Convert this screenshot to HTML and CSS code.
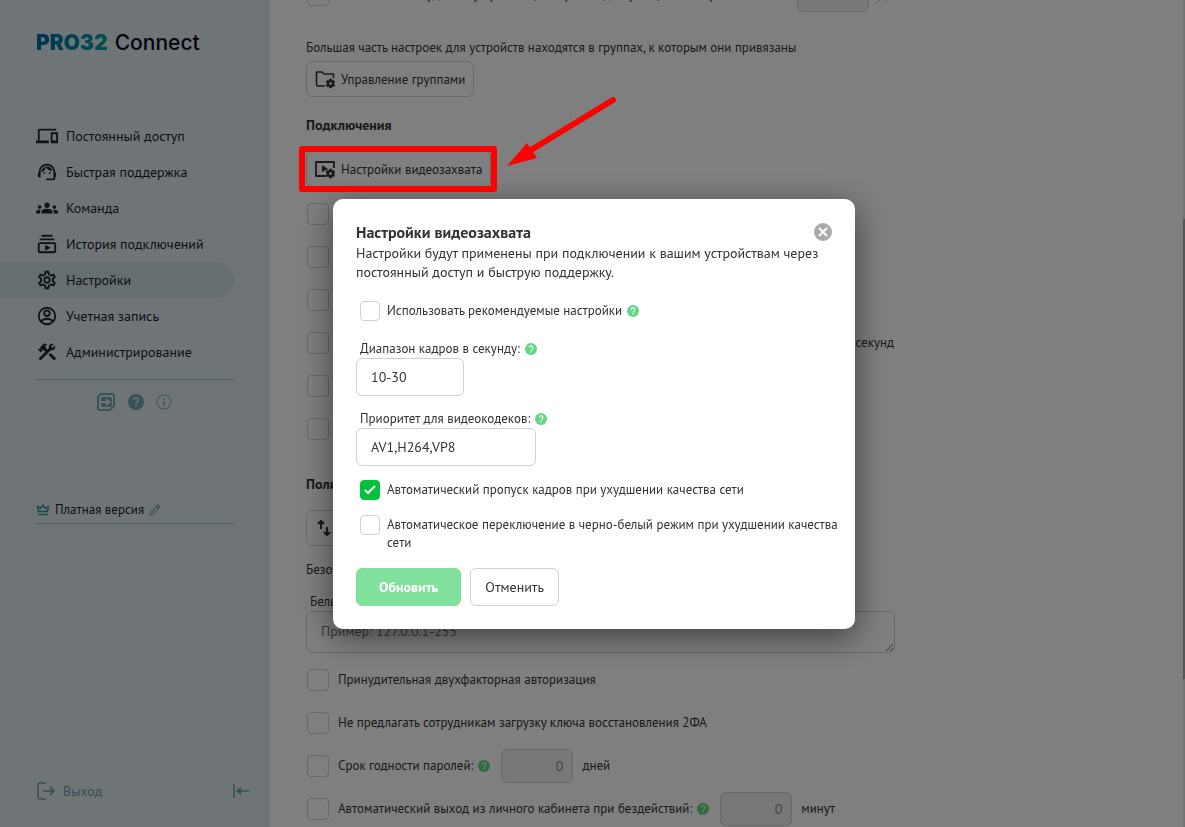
FILE: index.html
```
<!DOCTYPE html>
<html lang="ru">
<head>
  <meta charset="UTF-8">
  <meta name="viewport" content="width=device-width, initial-scale=1.0">
  <title>PRO32 Connect</title>
  <link rel="stylesheet" href="styles.css">
</head>
<body>
  <!-- Shared icons -->
  <svg class="sprite" aria-hidden="true">
    <symbol id="icon-help" viewBox="0 0 24 24">
      <circle cx="12" cy="12" r="12" fill="currentColor"/>
      <path class="cut" d="M8.4 9.2a3.6 3.6 0 1 1 5.6 3c-1.3.9-2 1.4-2 2.8" fill="none" stroke-width="2.2"/>
      <rect class="cut-fill" x="10.8" y="16.6" width="2.4" height="2.4"/>
    </symbol>
    <symbol id="icon-gear" viewBox="0 0 24 24">
      <path fill="currentColor" d="M19.43 12.98c.04-.32.07-.64.07-.98s-.03-.66-.07-.98l2.11-1.65c.19-.15.24-.42.12-.64l-2-3.46c-.09-.16-.26-.25-.44-.25-.06 0-.12.01-.17.03l-2.49 1c-.52-.4-1.08-.73-1.69-.98l-.38-2.65C14.46 2.18 14.25 2 14 2h-4c-.25 0-.46.18-.49.42l-.38 2.65c-.61.25-1.17.59-1.69.98l-2.49-1c-.06-.02-.12-.03-.18-.03-.17 0-.34.09-.43.25l-2 3.46c-.13.22-.07.49.12.64l2.11 1.65c-.04.32-.07.65-.07.98s.03.66.07.98l-2.11 1.65c-.19.15-.24.42-.12.64l2 3.46c.09.16.26.25.44.25.06 0 .12-.01.17-.03l2.49-1c.52.4 1.08.73 1.69.98l.38 2.65c.03.24.24.42.49.42h4c.25 0 .46-.18.49-.42l.38-2.65c.61-.25 1.17-.59 1.69-.98l2.49 1c.06.02.12.03.18.03.17 0 .34-.09.43-.25l2-3.46c.12-.22.07-.49-.12-.64l-2.11-1.65zM12 15.5a3.5 3.5 0 1 1 0-7 3.5 3.5 0 0 1 0 7z"/>
    </symbol>
  </svg>

  <div class="app">
    <!-- Sidebar -->
    <aside class="sidebar">
      <a href="#" class="logo"><span class="logo-mark">PRO32</span> <span class="logo-name">Connect</span></a>

      <nav class="nav">
        <a href="#" class="nav-item">
          <svg viewBox="0 0 24 24"><path d="M4 6h18V4H4c-1.1 0-2 .9-2 2v11H0v3h14v-3H4V6zm19 2h-6c-.55 0-1 .45-1 1v10c0 .55.45 1 1 1h6c.55 0 1-.45 1-1V9c0-.55-.45-1-1-1zm-1 9h-4v-7h4v7z"/></svg>
          Постоянный доступ
        </a>
        <a href="#" class="nav-item">
          <svg viewBox="0 0 24 24"><path d="M21 12.22C21 6.73 16.74 3 12 3c-4.69 0-9 3.65-9 9.28-.6.34-1 .98-1 1.72v2c0 1.1.9 2 2 2h1v-6.1c0-3.87 3.13-7 7-7s7 3.13 7 7V19h-8v2h8c1.1 0 2-.9 2-2v-1.22c.59-.31 1-.92 1-1.64v-2.3c0-.7-.41-1.31-1-1.62z"/><circle cx="9" cy="13" r="1"/><circle cx="15" cy="13" r="1"/><path d="M18 11.03C17.52 8.18 15.04 6 12.05 6c-3.03 0-6.29 2.51-6.03 6.45 2.47-1.01 4.33-3.21 4.86-5.89 1.31 2.63 4 4.44 7.12 4.47z"/></svg>
          Быстрая поддержка
        </a>
        <a href="#" class="nav-item">
          <svg viewBox="0 0 24 24"><path d="M12 12.75c1.63 0 3.07.39 4.24.9 1.08.48 1.76 1.56 1.76 2.73V18H6v-1.61c0-1.18.68-2.26 1.76-2.73 1.17-.52 2.61-.91 4.24-.91zM4 13c1.1 0 2-.9 2-2s-.9-2-2-2-2 .9-2 2 .9 2 2 2zm1.13 1.1c-.37-.06-.74-.1-1.13-.1-.99 0-1.93.21-2.78.58C.48 14.9 0 15.62 0 16.43V18h4.5v-1.61c0-.83.23-1.61.63-2.29zM20 13c1.1 0 2-.9 2-2s-.9-2-2-2-2 .9-2 2 .9 2 2 2zm4 3.43c0-.81-.48-1.53-1.22-1.85-.85-.37-1.79-.58-2.78-.58-.39 0-.76.04-1.13.1.4.68.63 1.46.63 2.29V18H24v-1.57zM12 6c1.66 0 3 1.34 3 3s-1.34 3-3 3-3-1.34-3-3 1.34-3 3-3z"/></svg>
          Команда
        </a>
        <a href="#" class="nav-item">
          <svg viewBox="0 0 24 24"><path d="M4 6h16v2H4V6zm2-4h12v2H6V2zm14 8H4c-1.1 0-2 .9-2 2v8c0 1.1.9 2 2 2h16c1.1 0 2-.9 2-2v-8c0-1.1-.9-2-2-2zm0 10H4v-8h16v8zm-10-7.27v6.53L16 16l-6-3.27z"/></svg>
          История подключений
        </a>
        <a href="#" class="nav-item active">
          <svg viewBox="0 0 24 24"><path d="M19.43 12.98c.04-.32.07-.64.07-.98s-.03-.66-.07-.98l2.11-1.65c.19-.15.24-.42.12-.64l-2-3.46c-.09-.16-.26-.25-.44-.25-.06 0-.12.01-.17.03l-2.49 1c-.52-.4-1.08-.73-1.69-.98l-.38-2.65C14.46 2.18 14.25 2 14 2h-4c-.25 0-.46.18-.49.42l-.38 2.65c-.61.25-1.17.59-1.69.98l-2.49-1c-.06-.02-.12-.03-.18-.03-.17 0-.34.09-.43.25l-2 3.46c-.13.22-.07.49.12.64l2.11 1.65c-.04.32-.07.65-.07.98s.03.66.07.98l-2.11 1.65c-.19.15-.24.42-.12.64l2 3.46c.09.16.26.25.44.25.06 0 .12-.01.17-.03l2.49-1c.52.4 1.08.73 1.69.98l.38 2.65c.03.24.24.42.49.42h4c.25 0 .46-.18.49-.42l.38-2.65c.61-.25 1.17-.59 1.69-.98l2.49 1c.06.02.12.03.18.03.17 0 .34-.09.43-.25l2-3.46c.12-.22.07-.49-.12-.64l-2.11-1.65zm-1.98-1.71c.04.31.05.52.05.73 0 .21-.02.43-.05.73l-.14 1.13.89.7 1.08.84-.7 1.21-1.27-.51-1.04-.42-.9.68c-.43.32-.84.56-1.25.73l-1.06.43-.16 1.13-.2 1.35h-1.4l-.19-1.35-.16-1.13-1.06-.43c-.43-.18-.83-.41-1.23-.71l-.91-.7-1.06.43-1.27.51-.7-1.21 1.08-.84.89-.7-.14-1.13c-.03-.31-.05-.54-.05-.74s.02-.43.05-.73l.14-1.13-.89-.7-1.08-.84.7-1.21 1.27.51 1.04.42.9-.68c.43-.32.84-.56 1.25-.73l1.06-.43.16-1.13.2-1.35h1.39l.19 1.35.16 1.13 1.06.43c.43.18.83.41 1.23.71l.91.7 1.06-.43 1.27-.51.7 1.21-1.07.85-.89.7.14 1.13zM12 8c-2.21 0-4 1.79-4 4s1.79 4 4 4 4-1.79 4-4-1.79-4-4-4zm0 6c-1.1 0-2-.9-2-2s.9-2 2-2 2 .9 2 2-.9 2-2 2z"/></svg>
          Настройки
        </a>
        <a href="#" class="nav-item">
          <svg viewBox="0 0 24 24" class="outline"><circle cx="12" cy="12" r="9"/><circle cx="12" cy="9" r="3"/><path d="M5.500 18c2-2.600 4.200-3 6.500-3s4.500.4 6.500 3"/></svg>
          Учетная запись
        </a>
        <a href="#" class="nav-item">
          <svg viewBox="0 0 24 24"><path d="M13.78 15.17l2.12-2.12 6 6-2.12 2.12z"/><path d="M17.5 10c1.93 0 3.5-1.57 3.5-3.5 0-.58-.16-1.12-.41-1.6l-2.7 2.7-1.49-1.49 2.7-2.7c-.48-.25-1.02-.41-1.6-.41C15.57 3 14 4.57 14 6.5c0 .41.08.8.21 1.16l-1.85 1.85-1.78-1.78.71-.71-1.41-1.41L12 3.49c-1.17-1.17-3.07-1.17-4.24 0L4.22 7.03l1.41 1.41H2.81L2.1 9.15l3.54 3.54.71-.71V9.15l1.41 1.41.71-.71 1.78 1.78-7.41 7.41 2.12 2.12L16.34 9.79c.36.13.75.21 1.16.21z"/></svg>
          Администрирование
        </a>
      </nav>

      <div class="quick-links">
        <a href="#" aria-label="Подключиться">
          <svg width="20" height="20" viewBox="0 0 20 20" fill="none" stroke="currentColor"><path d="M5 2h11a2 2 0 0 1 2 2v10l-4 4H4a2 2 0 0 1-2-2V5z" stroke-width="2"/><rect x="5" y="5" width="11" height="10" rx="2" fill="currentColor" stroke="none"/><path class="cut" d="M5 10h6" stroke-width="2"/><path class="cut-fill" d="M10 6l5 4-5 4z" stroke="none"/></svg>
        </a>
        <a href="#" aria-label="Помощь"><svg width="16" height="16"><use href="#icon-help"/></svg></a>
        <a href="#" class="faded" aria-label="О программе">
          <svg width="16" height="16" viewBox="0 0 16 16" fill="none" stroke="currentColor"><circle cx="8" cy="8" r="7" stroke-width="1.4"/><path d="M8 7v5M8 4v2" stroke-width="2"/></svg>
        </a>
      </div>

      <div class="plan">
        <svg class="crown" width="14" height="14" viewBox="0 0 14 14" fill="none" stroke="currentColor"><path d="M2.500 8.500h9l.8-5-3 2L7 2 4.700 5.500l-3-2zM2 11.500h10" stroke-width="1.500"/></svg>
        <span>Платная версия</span>
        <a href="#" aria-label="Изменить">
          <svg width="12" height="12" viewBox="0 0 12 12" fill="none" stroke="currentColor" stroke-width="1.300"><path d="M1 11l.6-2.500L9 1l2 2-7.500 7.500zM7.600 2.500l2 2"/></svg>
        </a>
      </div>

      <div class="sidebar-footer">
        <a href="#" class="logout">
          <svg width="20" height="18" viewBox="0 0 20 18" fill="none" stroke="currentColor" stroke-width="1.500"><path d="M10 1H4a2 2 0 0 0-2 2v12a2 2 0 0 0 2 2h6M7 9h11M14 5l4 4-4 4"/></svg>
          Выход
        </a>
        <button class="collapse" aria-label="Свернуть меню">
          <svg width="18" height="16" viewBox="0 0 18 16" fill="none" stroke="currentColor" stroke-width="1.500"><path d="M2 1v14M6 8h11"/><path d="M9 4L4 8l5 4z" fill="currentColor" stroke="none"/></svg>
        </button>
      </div>
    </aside>

    <!-- Settings page -->
    <main class="main">
      <div class="content">
        <div class="option first">
          <input type="checkbox" id="auto-delete">
          <label for="auto-delete">Автоматически удалять устройства, которые недоступны, и если прошло более:</label>
          <input type="text" class="number" aria-label="Дней до удаления" disabled>
          <span>дней</span>
        </div>

        <p class="note">Большая часть настроек для устройств находятся в группах, к которым они привязаны</p>
        <button class="tool-button">
          <svg width="20" height="20" viewBox="0 0 20 20" fill="none" stroke="currentColor"><path d="M10 17H3a1.500 1.500 0 0 1-1.500-1.500V3H7l2 2h9.500v4" stroke-width="1.600" stroke-linejoin="round"/><use href="#icon-gear" x="10" y="9" width="11" height="11"/></svg>
          Управление группами
        </button>

        <h2 class="section-title">Подключения</h2>
        <div class="highlight">
          <button class="tool-button">
            <svg width="20" height="20" viewBox="0 0 20 20" fill="none" stroke="currentColor"><path d="M11 17H1V3h18v6" stroke-width="1.800" stroke-linejoin="round"/><path d="M7 6l6 4-6 3z" fill="currentColor" stroke="none"/><use href="#icon-gear" x="10" y="9" width="11" height="11"/></svg>
            Настройки видеозахвата
          </button>
          <!-- Hint arrow -->
          <svg class="hint-arrow" width="110" height="72" viewBox="0 0 110 72">
            <path d="M106 4L24 54" stroke="#f00" stroke-width="6" stroke-linecap="round"/>
            <path d="M0 70L20 47L30 62z" fill="#f00"/>
          </svg>
        </div>

        <div class="options">
          <div class="option"><input type="checkbox" aria-label="Передавать звук"></div>
          <div class="option"><input type="checkbox" aria-label="Скрывать обои"></div>
          <div class="option"><input type="checkbox" aria-label="Записывать сеансы"></div>
          <div class="option"><input type="checkbox" id="idle"><label for="idle" class="unit">секунд</label></div>
          <div class="option"><input type="checkbox" aria-label="Блокировать экран"></div>
          <div class="option"><input type="checkbox" aria-label="Запрашивать подтверждение"></div>
        </div>

        <h2 class="section-title policies">Политики</h2>
        <button class="tool-button sort" aria-label="Порядок">
          <svg width="20" height="20" viewBox="0 0 20 20" fill="none" stroke="currentColor" stroke-width="2"><path d="M6 11V3M3 6l3-3 3 3M12 9v8M9 14l3 3 3-3"/></svg>
        </button>
        <p class="subtitle">Безопасность</p>
        <label class="field-label" for="ips">Белый список</label>
        <textarea id="ips" placeholder="Пример: 127.0.0.1-255"></textarea>

        <div class="options">
          <div class="option"><input type="checkbox" id="two-factor"><label for="two-factor">Принудительная двухфакторная авторизация</label></div>
          <div class="option"><input type="checkbox" id="no-key"><label for="no-key">Не предлагать сотрудникам загрузку ключа восстановления 2ФА</label></div>
          <div class="option">
            <input type="checkbox" id="expiry"><label for="expiry">Срок годности паролей:</label>
            <svg class="help" width="12" height="12"><use href="#icon-help"/></svg>
            <input type="text" class="number" value="0" aria-label="Срок годности паролей, дней" disabled>
            <span>дней</span>
          </div>
          <div class="option">
            <input type="checkbox" id="autologout"><label for="autologout">Автоматический выход из личного кабинета при бездействий:</label>
            <svg class="help" width="12" height="12"><use href="#icon-help"/></svg>
            <input type="text" class="number" value="0" aria-label="Выход при бездействии, минут" disabled>
            <span>минут</span>
          </div>
        </div>
      </div>
      <div class="scrollbar"><div class="thumb"></div></div>
    </main>
  </div>

  <!-- Video capture dialog -->
  <div class="overlay">
    <div class="modal" role="dialog" aria-labelledby="modal-title">
      <div class="modal-header">
        <h1 id="modal-title">Настройки видеозахвата</h1>
        <button class="modal-close" aria-label="Закрыть">
          <svg width="18" height="18" viewBox="0 0 18 18"><circle cx="9" cy="9" r="9" fill="#aaa"/><path d="M5 5l8 8M13 5l-8 8" stroke="#fff" stroke-width="2"/></svg>
        </button>
      </div>
      <p class="modal-text">Настройки будут применены при подключении к вашим устройствам через постоянный доступ и быструю поддержку.</p>

      <div class="check recommended">
        <input type="checkbox" id="recommended">
        <label for="recommended">Использовать рекомендуемые настройки</label>
        <svg class="help" width="12" height="12"><use href="#icon-help"/></svg>
      </div>

      <div class="field">
        <div class="caption"><label for="fps">Диапазон кадров в секунду:</label><svg class="help" width="12" height="12"><use href="#icon-help"/></svg></div>
        <input type="text" id="fps" class="fps" value="10-30">
      </div>
      <div class="field">
        <div class="caption"><label for="codecs">Приоритет для видеокодеков:</label><svg class="help" width="12" height="12"><use href="#icon-help"/></svg></div>
        <input type="text" id="codecs" class="codecs" value="AV1,H264,VP8">
      </div>

      <div class="check">
        <input type="checkbox" id="skip" checked>
        <label for="skip">Автоматический пропуск кадров при ухудшении качества сети</label>
      </div>
      <div class="check">
        <input type="checkbox" id="mono">
        <label for="mono">Автоматическое переключение в черно-белый режим при ухудшении качества сети</label>
      </div>

      <div class="actions">
        <button class="btn btn-primary">Обновить</button>
        <button class="btn">Отменить</button>
      </div>
    </div>
  </div>
</body>
</html>
```

FILE: styles.css
```
* {
  box-sizing: border-box;
}

body {
  margin: 0;
  font-family: "PT Sans", Roboto, sans-serif;
  font-size: 13px;
  line-height: 18px;
  color: #333;
  background: #fff;
}

h1, h2, p {
  margin: 0;
}

a {
  color: inherit;
  text-decoration: none;
}

button, input, textarea {
  font-family: inherit;
  color: inherit;
}

button {
  cursor: pointer;
}

svg {
  flex-shrink: 0;
}

.sprite {
  position: absolute;
  width: 0;
  height: 0;
}

.cut {
  stroke: var(--cut, #fff);
}

.cut-fill {
  fill: var(--cut, #fff);
}

.app {
  display: flex;
  height: 100vh;
}

/* Sidebar */
.sidebar {
  --cut: #dfebef;
  display: flex;
  flex-direction: column;
  flex: 0 0 270px;
  padding: 30px 36px 24px 0;
  background: #dfebef;
  color: #1a1a2b;
}

.logo {
  display: flex;
  gap: 7px;
  margin-left: 36px;
  font-family: Inter, sans-serif;
  font-size: 21px;
  line-height: 26px;
}

.logo-mark {
  font-weight: 900;
  background: linear-gradient(90deg, #00679f, #00a29f);
  background-clip: text;
  -webkit-background-clip: text;
  color: transparent;
}

.logo-name {
  font-weight: 500;
  color: #05051e;
}

.nav {
  margin-top: 62px;
}

.nav-item {
  display: flex;
  align-items: center;
  gap: 8px;
  height: 36px;
  padding-left: 36px;
  font-size: 14px;
  border-radius: 0 18px 18px 0;
}

.nav-item svg {
  width: 22px;
  height: 22px;
  fill: #1e2530;
}

.nav-item .outline {
  fill: none;
  stroke: #1e2530;
  stroke-width: 2;
}

.nav-item.active {
  background: #cbdfe0;
}

.quick-links {
  display: flex;
  justify-content: center;
  align-items: center;
  gap: 12px;
  margin: 9px 0 0 36px;
  padding: 12px 2px 0 0;
  border-top: 1px solid #8fb9c2;
  color: #73a5af;
}

.quick-links a {
  display: flex;
}

.faded {
  opacity: 0.7;
}

.plan {
  display: flex;
  align-items: center;
  gap: 5px;
  margin: 89px 0 0 36px;
  padding-bottom: 4px;
  border-bottom: 1px solid #8fb9c2;
}

.plan a {
  display: flex;
  color: #82abb2;
}

.crown {
  color: #3b8c99;
}

.sidebar-footer {
  display: flex;
  justify-content: space-between;
  align-items: center;
  margin: auto -16px 0 36px;
  color: #689ba6;
}

.logout {
  display: flex;
  align-items: center;
  gap: 7px;
  font-size: 14px;
  line-height: 24px;
}

.collapse {
  display: flex;
  padding: 0;
  border: none;
  background: none;
}

/* Settings page */
.main {
  display: flex;
  flex: 1;
  min-width: 0;
  overflow: hidden;
}

.content {
  flex: 1;
  min-width: 0;
  margin-top: -22px;
  padding: 0 36px;
}

.option {
  display: flex;
  align-items: center;
  height: 43px;
  max-width: 588px;
  white-space: nowrap;
}

.option.first {
  height: 34px;
  max-width: none;
}

.option input[type="checkbox"] {
  width: 22px;
  height: 22px;
  margin: 0 9px 0 1px;
}

.option .help {
  margin-left: 5px;
}

.option .unit {
  margin-left: auto;
}

input[type="checkbox"] {
  appearance: none;
  flex-shrink: 0;
  width: 20px;
  height: 20px;
  margin: 0;
  border: 1px solid #d0d0d0;
  border-radius: 4px;
  background: #fff;
}

input[type="checkbox"]:checked {
  border-color: #00c13a;
  background: #00c13a url("data:image/svg+xml,%3Csvg xmlns='http://www.w3.org/2000/svg' viewBox='0 0 18 18'%3E%3Cpath d='M4 9l3 3 7-7' fill='none' stroke='white' stroke-width='2'/%3E%3C/svg%3E") center;
}

.number {
  width: 72px;
  height: 34px;
  margin: 0 9px 0 11px;
  padding: 0 9px;
  border: 1px solid #d0d0d0;
  border-radius: 6px;
  background: #f0f0f0;
  font-size: 14px;
  text-align: right;
}

.number:disabled {
  color: #888;
}

.help {
  color: #62d785;
}

.note {
  margin-top: 27px;
}

.tool-button {
  display: flex;
  align-items: center;
  gap: 6px;
  height: 36px;
  margin-top: 4px;
  padding: 0 8px;
  border: 1px solid #d0d0d0;
  border-radius: 6px;
  background: #fff;
  font-size: 13px;
}

.section-title {
  margin-top: 19px;
  font-size: 14px;
  line-height: 18px;
}

/* Frame and arrow stay above the dimmed page */
.highlight {
  position: relative;
  width: fit-content;
  margin-top: 17px;
}

.highlight .tool-button {
  margin-top: 0;
}

.highlight::after {
  content: "";
  position: absolute;
  inset: -5px -6px -5px -7px;
  border: 6px solid #f00;
  border-radius: 3px;
  z-index: 20;
}

.hint-arrow {
  position: absolute;
  left: 100%;
  bottom: 19px;
  margin-left: 16px;
  z-index: 20;
}

.options {
  margin-top: 5px;
}

.policies {
  margin-top: 25px;
}

.sort {
  margin-top: 17px;
}

.subtitle {
  margin-top: 15px;
}

.field-label {
  display: block;
  margin: 14px 0 0 4px;
}

textarea {
  display: block;
  width: 100%;
  max-width: 589px;
  height: 42px;
  padding: 10px 14px;
  border: 1px solid #d0d0d0;
  border-radius: 6px;
  background: #fff;
  font-size: 14px;
}

.scrollbar {
  width: 2px;
  padding-top: 219px;
  background: #e6e6e6;
}

.thumb {
  height: 460px;
  background: #aaa;
}

/* Dialog */
.overlay {
  position: fixed;
  inset: 0;
  display: flex;
  justify-content: center;
  align-items: center;
  padding-left: 3px;
  background: rgba(0, 0, 0, 0.5);
  z-index: 10;
}

.modal {
  width: 522px;
  max-width: 100%;
  padding: 23px;
  border-radius: 10px;
  background: #fff;
  box-shadow: 0 8px 32px rgba(0, 0, 0, 0.5);
}

.modal-header {
  display: flex;
  justify-content: space-between;
  align-items: center;
  margin-bottom: 2px;
}

.modal h1 {
  font-size: 16px;
  line-height: 20px;
}

.modal-close {
  display: flex;
  padding: 0;
  border: none;
  background: none;
}

.modal-text {
  font-size: 14px;
  line-height: 19px;
}

.check {
  display: flex;
  gap: 7px;
  margin: 14px -12px 15px 4px;
}

.check label {
  padding-top: 1px;
}

.check.recommended {
  align-items: center;
  margin: 19px 0 19px 4px;
}

.check.recommended label {
  padding-top: 0;
}

.check .help {
  margin-left: -2px;
}

.caption {
  display: flex;
  align-items: center;
  gap: 5px;
  margin-left: 4px;
}

.field {
  margin-bottom: 14px;
}

.field input {
  display: block;
  height: 38px;
  padding: 0 14px;
  border: 1px solid #d0d0d0;
  border-radius: 6px;
  font-size: 14px;
}

.fps {
  width: 108px;
}

.codecs {
  width: 180px;
}

.actions {
  display: flex;
  gap: 9px;
  margin-top: 16px;
}

.btn {
  height: 38px;
  padding: 0 14px;
  border: 1px solid #d0d0d0;
  border-radius: 6px;
  background: #fff;
  font-size: 14px;
}

.btn-primary {
  padding: 0 22px;
  border-color: #80e09c;
  background: #80e09c;
  color: #fff;
  font-weight: 700;
}
```
